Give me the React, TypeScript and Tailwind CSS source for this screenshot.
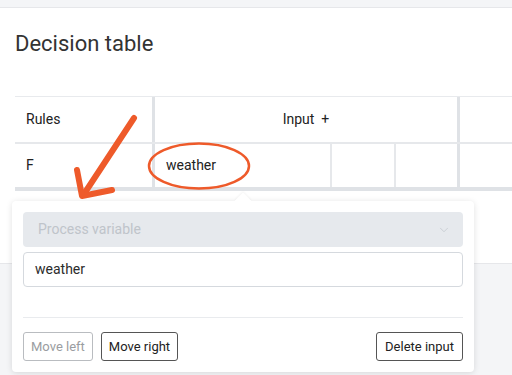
import { ChevronDown } from "lucide-react";

const font = { fontFamily: "Roboto, 'Liberation Sans', sans-serif" };

const Annotation = () => (
  <svg
    className="absolute left-0 top-0 pointer-events-none"
    width={512}
    height={375}
    viewBox="0 0 512 375"
  >
    <ellipse
      cx={199}
      cy={166}
      rx={50}
      ry={22.5}
      fill="none"
      stroke="#ee5a2a"
      strokeWidth={2.5}
    />
    <g
      stroke="#ee5a2a"
      strokeWidth={6}
      strokeLinecap="round"
      strokeLinejoin="round"
      fill="none"
    >
      <path d="M134 118 L84 194" />
      <path d="M77 170 L82 196 L112 190" />
    </g>
  </svg>
);

const Popover = () => (
  <div className="absolute left-[12px] top-[201px] w-[462px] h-[171px] bg-white rounded-[4px] shadow-[0_1px_6px_rgba(0,0,0,0.12)] p-[11px] flex flex-col">
    <div className="absolute left-[225px] -top-[6px] w-[12px] h-[12px] bg-white rotate-45 shadow-[-1px_-1px_2px_rgba(0,0,0,0.04)]" />
    <div className="relative h-[35px] rounded-[4px] bg-[#e6e9ed] flex items-center justify-between pl-[15px] pr-[12px]">
      <span className="text-[14px] text-[#bfc4ca]">Process variable</span>
      <ChevronDown size={14} strokeWidth={1.2} className="text-[#bfc4ca]" />
    </div>
    <div className="mt-[5px] h-[35px] rounded-[4px] border border-[#d5d9de] flex items-center pl-[11px] text-[14px] text-[#2b2b2b]">
      weather
    </div>
    <div className="mt-[30px] border-t border-[#e9ebee]" />
    <div className="mt-[14px] flex items-center justify-between">
      <div className="flex gap-[8px]">
        <button className="h-[29px] px-[7px] rounded-[3px] border border-[#b9bcc0] text-[13px] text-[#9a9da1]">
          Move left
        </button>
        <button className="h-[29px] px-[7px] rounded-[3px] border border-[#555] text-[13px] text-[#222]">
          Move right
        </button>
      </div>
      <button className="h-[29px] px-[8px] rounded-[3px] border border-[#555] text-[13px] text-[#222]">
        Delete input
      </button>
    </div>
  </div>
);

const DecisionTable = () => (
  <div className="w-[700px] border-t border-[#e8eaed] text-[14px] text-[#222]">
    <div className="flex h-[47px] border-b-2 border-[#e6e8eb]">
      <div className="w-[140px] border-r-[3px] border-[#dfe2e6] flex items-center pl-[11px]">
        Rules
      </div>
      <div className="w-[305px] border-r-[3px] border-[#dfe2e6] flex items-center justify-center">
        Input&nbsp;&nbsp;+
      </div>
      <div className="flex-1" />
    </div>
    <div className="flex h-[47px] border-b-4 border-[#dfe2e6]">
      <div className="w-[140px] border-r-[3px] border-[#dfe2e6] flex items-center pl-[11px]">
        F
      </div>
      <div className="w-[177px] border-r-2 border-[#e6e8eb] flex items-center pl-[11px]">
        weather
      </div>
      <div className="w-[64px] border-r-2 border-[#e6e8eb]" />
      <div className="w-[64px] border-r-[3px] border-[#dfe2e6]" />
      <div className="flex-1" />
    </div>
  </div>
);

export default function App() {
  return (
    <div
      className="relative w-[512px] h-[375px] overflow-hidden bg-[#f4f5f7]"
      style={font}
    >
      <div className="h-[8px] bg-[#f4f5f7] border-b border-[#e6e7ea]" />
      <div className="h-[255px] bg-white pl-[15px] overflow-hidden">
        <h1 className="pt-[18px] text-[22px] leading-[36px] text-[#333]">
          Decision table
        </h1>
        <div className="mt-[34px]">
          <DecisionTable />
        </div>
      </div>
      <div className="border-t border-[#e6e7ea]" />
      <Popover />
      <Annotation />
    </div>
  );
}
